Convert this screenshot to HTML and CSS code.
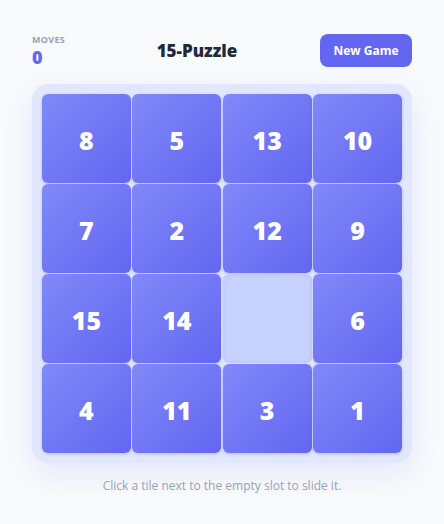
FILE: index.html
```html
<!DOCTYPE html>
<html lang="en">
<head>
    <meta charset="UTF-8">
    <title>15-Puzzle</title>
    <link rel="stylesheet" href="styles.css">
</head>
<body>
<div class="game">
    <div class="topbar">
        <div class="moves">
            <div class="movesLabel">MOVES</div>
            <div class="movesCount">0</div>
        </div>
        <h1 class="title">15-Puzzle</h1>
        <button class="newBtn">New Game</button>
    </div>
    <div class="board">
        <div class="tile">8</div>
        <div class="tile">5</div>
        <div class="tile">13</div>
        <div class="tile">10</div>
        <div class="tile">7</div>
        <div class="tile">2</div>
        <div class="tile">12</div>
        <div class="tile">9</div>
        <div class="tile">15</div>
        <div class="tile">14</div>
        <div class="slot"></div>
        <div class="tile">6</div>
        <div class="tile">4</div>
        <div class="tile">11</div>
        <div class="tile">3</div>
        <div class="tile">1</div>
    </div>
    <p class="hint">Click a tile next to the empty slot to slide it.</p>
</div>
</body>
</html>
```

FILE: styles.css
```css
*{
    margin: 0px;
    padding: 0px;
    box-sizing: border-box;
}
body{
    background-color: #f8fafc;
    font-family: "Open Sans", "Noto Sans", sans-serif;
}
.game{
    width: 380px;
    margin-left: 32px;
    padding-top: 34px;
}
.topbar{
    display: flex;
    justify-content: space-between;
    align-items: center;
    height: 33px;
    margin-bottom: 17px;
}
.moves{
    width: 42px;
}
.movesLabel{
    font-size: 9px;
    font-weight: 700;
    color: #94a3b8;
    letter-spacing: 0.3px;
    line-height: 12px;
}
.movesCount{
    margin-top: 1px;
    font-size: 18px;
    font-weight: 800;
    color: #6366f1;
    line-height: 21px;
}
.title{
    font-size: 17px;
    font-weight: 800;
    color: #1e293b;
}
.newBtn{
    width: 92px;
    height: 33px;
    border: none;
    border-radius: 8px;
    background-color: #6366f1;
    color: #ffffff;
    font-family: inherit;
    font-size: 12px;
    font-weight: 700;
    cursor: pointer;
}
.board{
    display: grid;
    grid-template-columns: repeat(4, 1fr);
    grid-auto-rows: 88.5px;
    gap: 1.5px;
    padding: 10px;
    background-color: #e0e7ff;
    border-radius: 16px;
    box-shadow: 0 10px 30px rgba(99, 102, 241, 0.12);
}
.tile{
    display: flex;
    align-items: center;
    justify-content: center;
    padding-top: 4px;
    border-radius: 6px;
    background: linear-gradient(135deg, #8189f8, #6366f1);
    box-shadow: 0 1px 3px rgba(67, 56, 202, 0.25);
    color: #ffffff;
    font-size: 25px;
    font-weight: 800;
    cursor: pointer;
}
.slot{
    border-radius: 6px;
    background-color: #c7d2fe;
    box-shadow: inset 0 0 4px rgba(99, 102, 241, 0.15);
}
.hint{
    margin-top: 15px;
    text-align: center;
    font-size: 12px;
    line-height: 16px;
    color: #94a3b8;
}
```
